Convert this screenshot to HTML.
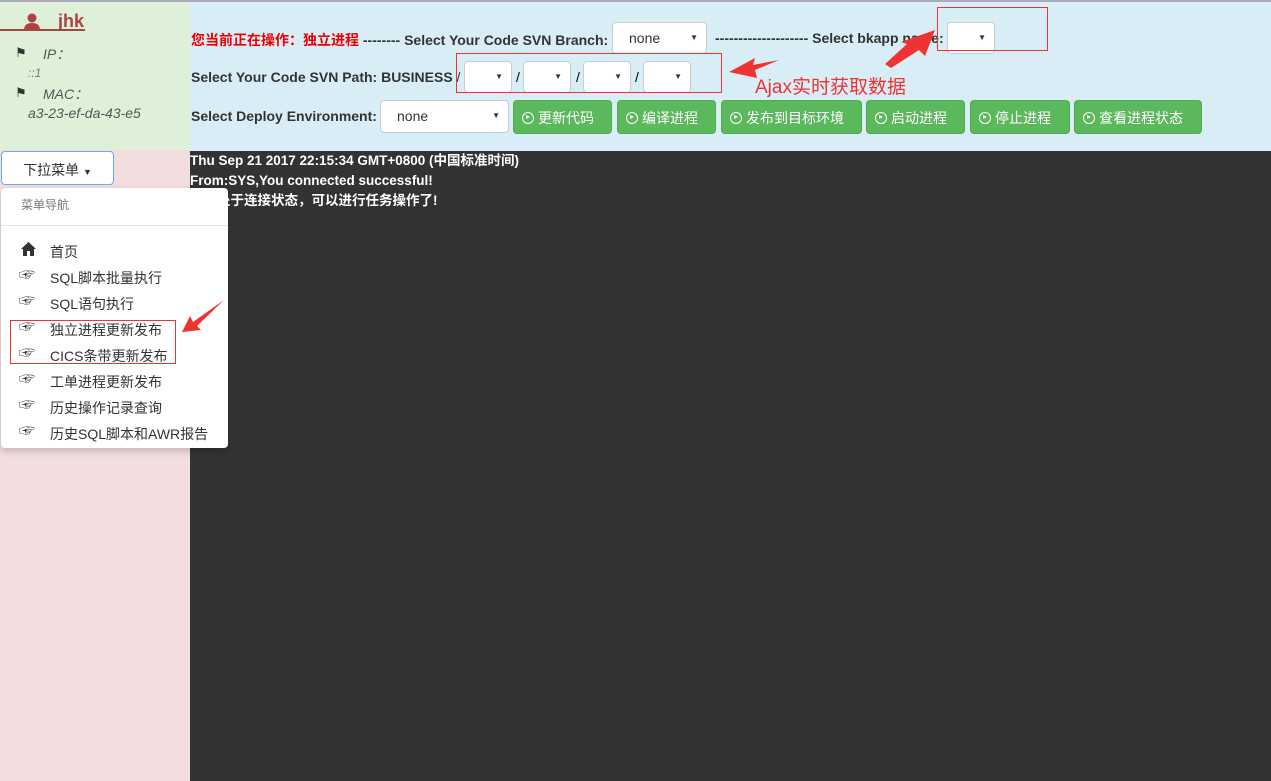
<!DOCTYPE html>
<html><head><meta charset="utf-8"><style>
*{margin:0;padding:0;box-sizing:border-box}
body{width:1271px;height:781px;overflow:hidden;position:relative;font-family:"Liberation Sans","Noto Sans CJK SC",sans-serif;font-size:14px;background:#f2dede}
.a{position:absolute}
.sel{position:absolute;background:#fff;border:1px solid #ccc;border-radius:4px;height:32px;font-size:14px;color:#333;padding:7px 16px}
.sel:after{content:"▼";position:absolute;right:8px;top:10px;font-size:8px;color:#333}
.btn{position:absolute;top:100px;height:34px;background:#5cb85c;border:1px solid #4cae4c;border-radius:4px;color:#fff;font-size:14px;padding:7px 8px;white-space:nowrap}
.btn i{display:inline-block;width:12px;height:12px;border:1.5px solid #fff;border-radius:50%;position:relative;margin-right:4px;vertical-align:-1px}
.btn i:after{content:"";position:absolute;left:3px;top:2px;border-left:4px solid #fff;border-top:2.5px solid transparent;border-bottom:2.5px solid transparent}
.lbl{position:absolute;font-weight:bold;color:#333;font-size:14px}
.rb{position:absolute;border:1px solid #e33}
.mi{position:absolute;left:50px;font-size:14px;color:#333}
.ic{position:absolute;left:19px;font-size:16px;line-height:18px;color:#333}
.cons{position:absolute;left:190px;color:#fff;font-weight:bold;font-size:13.5px;line-height:16px}
</style></head><body>
<div class="a" style="left:0;top:0;width:1271px;height:2px;background:#aab"></div>
<div class="a" style="left:0;top:2px;width:190px;height:148px;background:#dff0d8"></div>
<div class="a" style="left:190px;top:2px;width:1081px;height:149px;background:#d9edf7"></div>
<div class="a" style="left:190px;top:151px;width:1081px;height:630px;background:#333"></div>

<div class="a" style="left:0;top:29px;width:85px;height:2px;background:#a94442"></div>
<svg class="a" style="left:23px;top:12px" width="18" height="18" viewBox="0 0 18 18"><circle cx="9" cy="6" r="4.5" fill="#a94442"/><path d="M1 18 Q1 11 9 11 Q17 11 17 18Z" fill="#a94442"/></svg>
<div class="a" style="left:58px;top:11px;font-size:18px;font-weight:bold;color:#a94442">jhk</div>
<div class="a" style="left:15px;top:45px;font-size:13px;color:#333">⚑</div>
<div class="a" style="left:43px;top:44px;font-style:italic;color:#555">IP：</div>
<div class="a" style="left:28px;top:66px;font-style:italic;color:#777;font-size:12px">::1</div>
<div class="a" style="left:15px;top:85px;font-size:13px;color:#333">⚑</div>
<div class="a" style="left:43px;top:84px;font-style:italic;color:#555">MAC：</div>
<div class="a" style="left:28px;top:105px;font-style:italic;color:#555">a3-23-ef-da-43-e5</div>

<div class="lbl" style="left:191px;top:30px"><span style="color:#e00">您当前正在操作：独立进程</span> -------- Select Your Code SVN Branch:</div>
<div class="sel" style="left:612px;top:22px;width:95px">none</div>
<div class="lbl" style="left:715px;top:30px">-------------------- Select bkapp name:</div>
<div class="sel" style="left:947px;top:22px;width:48px"></div>
<div class="rb" style="left:937px;top:7px;width:111px;height:44px"></div>

<div class="lbl" style="left:191px;top:69px">Select Your Code SVN Path: BUSINESS <span style="font-weight:normal">/</span></div>
<div class="sel" style="left:464px;top:61px;width:48px"></div><div class="a" style="left:516px;top:69px">/</div>
<div class="sel" style="left:523px;top:61px;width:48px"></div><div class="a" style="left:576px;top:69px">/</div>
<div class="sel" style="left:583px;top:61px;width:48px"></div><div class="a" style="left:635px;top:69px">/</div>
<div class="sel" style="left:643px;top:61px;width:48px"></div>
<div class="rb" style="left:456px;top:53px;width:266px;height:40px"></div>
<svg class="a" style="left:725px;top:0" width="220" height="100"><path d="M4 72 L30 58 L28 65 L54 60 L30 70 L32 78Z" fill="#e33"/><path d="M160 64 L182 44 L176 42 L210 30 L200 56 L194 50 L166 68Z" fill="#e33"/></svg>
<div class="a" style="left:755px;top:72px;font-size:19px;color:#e33">Ajax实时获取数据</div>

<div class="lbl" style="left:191px;top:108px">Select Deploy Environment:</div>
<div class="sel" style="left:380px;top:100px;width:129px;height:33px">none</div>
<div class="btn" style="left:513px;width:99px"><i></i>更新代码</div>
<div class="btn" style="left:617px;width:99px"><i></i>编译进程</div>
<div class="btn" style="left:721px;width:141px"><i></i>发布到目标环境</div>
<div class="btn" style="left:866px;width:99px"><i></i>启动进程</div>
<div class="btn" style="left:970px;width:100px"><i></i>停止进程</div>
<div class="btn" style="left:1074px;width:128px"><i></i>查看进程状态</div>

<div class="cons" style="top:153px">Thu Sep 21 2017 22:15:34 GMT+0800 (中国标准时间)</div>
<div class="cons" style="top:173px">From:SYS,You connected successful!</div>
<div class="cons" style="top:193px">当前处于连接状态，可以进行任务操作了!</div>

<div class="a" style="left:1px;top:151px;width:113px;height:34px;background:#fff;border:1px solid #66afe9;border-radius:4px;text-align:center;padding-top:8px;color:#333">下拉菜单 <span style="font-size:9px">▼</span></div>
<div class="a" style="left:1px;top:188px;width:227px;height:260px;background:#fff;border-radius:4px;box-shadow:0 3px 8px rgba(0,0,0,.2)"></div>
<div class="a" style="left:21px;top:196px;font-size:12px;color:#777">菜单导航</div>
<div class="a" style="left:1px;top:225px;width:227px;height:1px;background:#e5e5e5"></div>
<svg class="a" style="left:21px;top:242px" width="15" height="14"><path d="M7.5 0 L15 7 L13 7 L13 14 L9 14 L9 9 L6 9 L6 14 L2 14 L2 7 L0 7Z" fill="#333"/></svg>
<div class="mi" style="top:242px">首页</div>
<div class="ic" style="top:267px">☞</div><div class="mi" style="top:268px">SQL脚本批量执行</div>
<div class="ic" style="top:293px">☞</div><div class="mi" style="top:294px">SQL语句执行</div>
<div class="ic" style="top:319px">☞</div><div class="mi" style="top:320px">独立进程更新发布</div>
<div class="ic" style="top:345px">☞</div><div class="mi" style="top:346px">CICS条带更新发布</div>
<div class="ic" style="top:371px">☞</div><div class="mi" style="top:372px">工单进程更新发布</div>
<div class="ic" style="top:397px">☞</div><div class="mi" style="top:398px">历史操作记录查询</div>
<div class="ic" style="top:423px">☞</div><div class="mi" style="top:424px">历史SQL脚本和AWR报告</div>
<div class="rb" style="left:10px;top:320px;width:166px;height:44px"></div>
<svg class="a" style="left:180px;top:298px" width="46" height="40"><path d="M2 34 L10 18 L13 24 L44 2 L17 28 L21 32Z" fill="#e33"/></svg>
</body></html>
